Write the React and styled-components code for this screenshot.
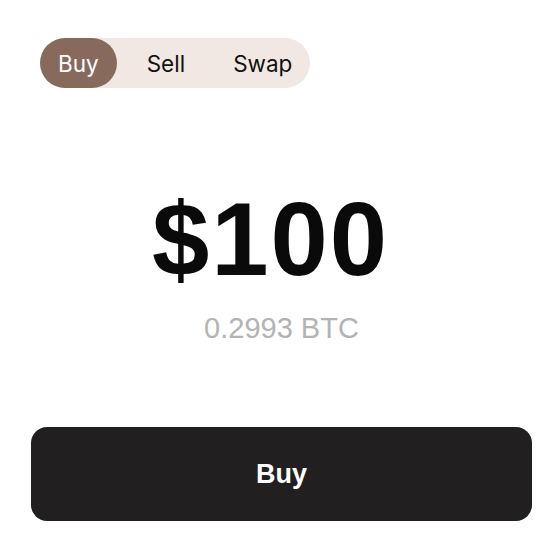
import React from 'react'
import styled, { createGlobalStyle } from 'styled-components'

const Global = createGlobalStyle`
  html, body { margin: 0; padding: 0; background: #fff; }
  body { font-family: "Liberation Sans", Arial, sans-serif; }
`

export default class App extends React.Component {
  constructor(props) {
    super(props)
    this.state = { mode: 'Buy' }
  }

  render() {
    const modes = ['Buy', 'Sell', 'Swap']
    return (
      <Page>
        <Global />
        <Tabs>
          {modes.map(m => (
            <Tab key={m} active={m === this.state.mode} onClick={() => this.setState({ mode: m })}>
              {m}
            </Tab>
          ))}
        </Tabs>
        <Amount>$100</Amount>
        <Converted>0.2993 BTC</Converted>
        <ActionButton>{this.state.mode}</ActionButton>
      </Page>
    )
  }
}

const Page = styled.div`
  width: 558px;
  height: 558px;
  box-sizing: border-box;
  padding: 38px 26px 0 31px;
  display: flex;
  flex-direction: column;
`

const Tabs = styled.div`
  align-self: flex-start;
  margin-left: 9px;
  display: flex;
  gap: 12px;
  height: 50px;
  background: #f1e8e4;
  border-radius: 25px;
`

const Tab = styled.div`
  display: flex;
  align-items: center;
  padding: 0 18px;
  border-radius: 25px;
  font-family: Inter, "Liberation Sans", sans-serif;
  font-size: 22.5px;
  color: ${p => (p.active ? '#ffffff' : '#111111')};
  background: ${p => (p.active ? '#876a5c' : 'transparent')};
  cursor: pointer;
`

const Amount = styled.div`
  margin-top: 92px;
  padding-right: 22px;
  text-align: center;
  font-size: 103px;
  font-weight: 700;
  letter-spacing: 2px;
  line-height: 120px;
  color: #0a0a0a;
`

const Converted = styled.div`
  margin-top: 12px;
  text-align: center;
  font-size: 29px;
  letter-spacing: 0;
  color: #b3b3b3;
`

const ActionButton = styled.div`
  margin-top: 82px;
  height: 94px;
  border-radius: 16px;
  background: #221f20;
  color: #fff;
  font-size: 27px;
  font-weight: 700;
  display: flex;
  align-items: center;
  justify-content: center;
`
